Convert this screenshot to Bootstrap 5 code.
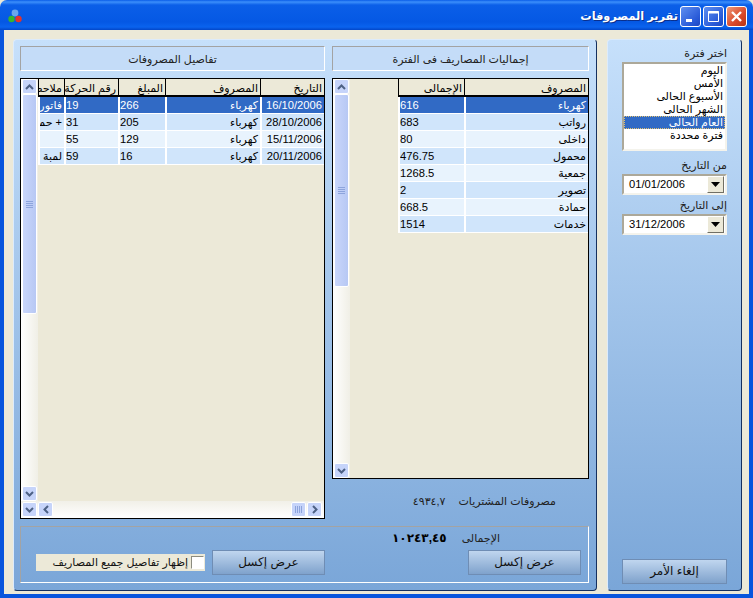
<!DOCTYPE html>
<html lang="ar" dir="rtl">
<head>
  <meta charset="UTF-8">
  <title>تقرير المصروفات</title>
  <meta name="viewport" content="width=device-width, initial-scale=1">
  <link href="https://cdn.jsdelivr.net/npm/bootstrap@5.3.0/dist/css/bootstrap.min.css" rel="stylesheet">
  <style>
    html, body { width: 753px; height: 598px; overflow: hidden; margin: 0; }
    body { font-family: "Liberation Sans", "DejaVu Sans", sans-serif; font-size: 11px; line-height: 13px; color: #000; background: #ece9d8; }
    .win { width: 753px; height: 598px; }
    .win-title { height: 30px; padding: 6px 6px 0 8px; border-radius: 7px 7px 0 0; background: linear-gradient(#0a5de8 0, #3c8ffb 2px, #0b5fe8 5px, #0558e4 22px, #0a63ee 27px, #0346c8 30px); }
    .win-title h1 { font-size: 11.3px; line-height: 21px; font-weight: 700; color: #fff; text-shadow: 1px 1px 0 #0a2f8c; margin: 0 2px 0 0; }
    .cap-btns { gap: 2px; }
    .cap-btn { width: 21px; height: 21px; border: 1px solid #fff; border-radius: 3px; background: linear-gradient(135deg, #5f8ff0, #2a5bd8 70%, #1e47c0); }
    .cap-close { background: linear-gradient(135deg, #ef9a78, #d8482a 60%, #b83414); }
    .app-icon { margin-right: auto; margin-top: 3px; }
    .win-body { height: 568px; padding: 9px 7px 3px 9px; border: solid #0855dd; border-width: 0 4px 4px; background: #ece9d8; gap: 10px; }
    .pane { background: linear-gradient(#c6e0fb, #7aa6d8); border: 1px solid; border-color: #dcebfc #15305f #15305f #dcebfc; border-radius: 4px; }
    .side-pane { width: 135px; padding: 7px 14px 6px; }
    .main-pane { width: 584px; padding: 6px 7px 7px 6px; }
    .pane-cols { gap: 7px; }
    .col-l { width: 305px; }
    .col-r { width: 257px; }
    .pane-head { height: 25px; line-height: 25px; text-align: center; color: #222; border: 1px solid; border-color: #a3a3a3 #fff #fff #a3a3a3; background: #c4dcf8; margin-bottom: 7px; }
    .data-box { border: 1px solid #000; background: #ece9d8; overflow: hidden; }
    .grid-l { height: 441px; }
    .grid-r { height: 401px; }
    .vbar { width: 17px; padding: 0 1px; background: linear-gradient(90deg, #fff, #f0efe6); }
    .sb-btn { width: 15px; height: 15px; border: 1px solid #fff; border-radius: 2px; background: #c6d4fa; flex-shrink: 0; }
    .sb-thumb { border: 1px solid #fff; border-radius: 2px; background: linear-gradient(90deg, #c9d6fb, #b7c8f4); color: #8da4dc; }
    .v-thumb-l { height: 220px; width: 15px; }
    .v-thumb-r { height: 193px; width: 15px; }
    .hbar { height: 17px; gap: 1px; padding: 0 2px 0 1px; background: linear-gradient(#f1f0e8, #fff); }
    .grid-table { table-layout: fixed; border-collapse: separate; border-spacing: 0; }
    .tbl-l { width: 286px; }
    .tbl-r { width: 190px; }
    .grid-table th { height: 18px; padding: 2px 2px 0; font-weight: 400; text-align: right; white-space: nowrap; overflow: hidden; border-left: 1px solid #000; border-bottom: 2px solid #000; background: #ece9d8; }
    .grid-table td { height: 17px; padding: 0 2px; white-space: nowrap; overflow: hidden; border-left: 2px solid #fff; border-bottom: 1px solid #fff; background: #e8f3fd; font-size: 11.2px; }
    .grid-table tr:nth-child(even) td { background: #d0e5fb; }
    .grid-table tr.row-sel td { background: #316ac5; color: #fff; }
    .grid-table td.num-cell { text-align: left; padding-left: 0; }
    .grid-table td.txt-cell { font-size: 11px; }
    .sum-row { height: 40px; padding: 16px 33px 0 0; gap: 13px; color: #222; }
    .total-box { height: 57px; margin-top: 7px; padding: 5px 7px 0 8px; border: 1px solid; border-color: #a3a3a3 #fff #fff #a3a3a3; }
    .total-line { height: 13px; padding-right: 81px; gap: 15px; margin-bottom: 5px; color: #222; }
    .total-line b { font-size: 12px; color: #000; }
    .xp-btn { height: 25px; padding: 0; font-size: 12px; line-height: 23px; color: #111; border: 1px solid #6f8db4; border-radius: 0; background: linear-gradient(#c0d6ef, #7fa2cc); }
    .xp-btn-wide { width: 113px; }
    .xp-btn-cancel { width: 105px; }
    .gap-btns { margin-right: 143px; margin-left: 7px; }
    .show-all { width: 169px; height: 17px; padding-right: 1px; gap: 3px; background: #ece9d8; color: #111; margin-top: 4px; }
    .xp-check { width: 13px; height: 13px; border: 1px solid; border-color: #8c8c80 #fff #fff #8c8c80; background: #fff; }
    .side-label { text-align: right; color: #222; height: 13px; margin-bottom: 2px; }
    .period-list { height: 89px; margin: 0 0 8px; padding: 0; background: #fff; border: 2px solid; border-color: #aca899 #f4f3ec #f4f3ec #aca899; }
    .period-list li { height: 13px; padding-right: 2px; text-align: right; white-space: nowrap; }
    .period-list li.sel { background: #316ac5; color: #fff; outline: 1px dotted #e0c070; outline-offset: -1px; }
    .date-combo { height: 21px; margin-bottom: 4px; padding: 0 1px; background: #fff; border: 2px solid; border-color: #aca899 #f4f3ec #f4f3ec #aca899; font-size: 11.2px; }
    .date-btn { width: 17px; height: 17px; background: #ece9d8; border: 1px solid; border-color: #fff #716f64 #716f64 #fff; }
  </style>
</head>
<body>
  <div class="win d-flex flex-column">
    <!-- title bar -->
    <div class="win-title d-flex align-items-start">
      <div class="cap-btns d-flex">
        <div class="cap-btn cap-close d-flex align-items-center justify-content-center">
          <svg width="13" height="13" viewBox="0 0 13 13"><path d="M2 2 11 11M11 2 2 11" stroke="#fff" stroke-width="2.4"/></svg>
        </div>
        <div class="cap-btn d-flex align-items-center justify-content-center">
          <svg width="13" height="13" viewBox="0 0 13 13"><path d="M1.5 1.5h10v10h-10z" fill="none" stroke="#fff"/><path d="M1 2.5h11" stroke="#fff" stroke-width="2"/></svg>
        </div>
        <div class="cap-btn d-flex align-items-center justify-content-center">
          <svg width="13" height="13" viewBox="0 0 13 13"><path d="M2 10.5h6" stroke="#fff" stroke-width="3"/></svg>
        </div>
      </div>
      <h1>تقرير المصروفات</h1>
      <svg class="app-icon" width="14" height="14" viewBox="0 0 14 14">
        <circle cx="7" cy="4" r="3.4" fill="#6aa7ee"/>
        <circle cx="3.5" cy="10" r="3.2" fill="#35b52f"/>
        <circle cx="10.5" cy="10" r="3.2" fill="#e5332a"/>
      </svg>
    </div>

    <div class="win-body d-flex">
      <!-- period pane -->
      <div class="pane side-pane d-flex flex-column">
        <div class="side-label">اختر فترة</div>
        <ul class="period-list list-unstyled">
          <li>اليوم</li>
          <li>الأمس</li>
          <li>الأسبوع الحالى</li>
          <li>الشهر الحالى</li>
          <li class="sel">العام الحالى</li>
          <li>فترة محددة</li>
        </ul>
        <div class="side-label">من التاريخ</div>
        <div class="date-combo d-flex align-items-center justify-content-between">
          <span class="date-btn d-flex align-items-center justify-content-center"><svg width="9" height="5" viewBox="0 0 9 5"><path d="M0 0h9L4.5 5z" fill="#000"/></svg></span>
          <span dir="ltr" class="ms-1">01/01/2006</span>
        </div>
        <div class="side-label">إلى التاريخ</div>
        <div class="date-combo d-flex align-items-center justify-content-between">
          <span class="date-btn d-flex align-items-center justify-content-center"><svg width="9" height="5" viewBox="0 0 9 5"><path d="M0 0h9L4.5 5z" fill="#000"/></svg></span>
          <span dir="ltr" class="ms-1">31/12/2006</span>
        </div>
        <button type="button" class="btn xp-btn xp-btn-cancel mt-auto">إلغاء الأمر</button>
      </div>

      <!-- report pane -->
      <div class="pane main-pane d-flex flex-column">
        <div class="pane-cols d-flex">
          <div class="col-r">
            <div class="pane-head">إجماليات المصاريف فى الفترة</div>
            <div class="data-box grid-r d-flex">
              <div class="flex-grow-1">
                <table class="grid-table tbl-r">
                  <colgroup><col style="width:124px"><col style="width:66px"></colgroup>
                  <thead><tr><th>المصروف</th><th>الإجمالى</th></tr></thead>
                  <tbody id="totalsRows"></tbody>
                </table>
              </div>
              <div class="vbar d-flex flex-column">
                <div class="sb-btn d-flex align-items-center justify-content-center"><svg width="9" height="6" viewBox="0 0 9 6"><path d="M1 5 4.5 1.5 8 5" fill="none" stroke="#4d6185" stroke-width="2"/></svg></div>
                <div class="sb-thumb v-thumb-r d-flex align-items-center justify-content-center"><svg width="7" height="7" viewBox="0 0 7 7"><path d="M0 .5h7M0 2.5h7M0 4.5h7M0 6.5h7" stroke="#8da4dc"/></svg></div>
                <div class="sb-btn mt-auto d-flex align-items-center justify-content-center"><svg width="9" height="6" viewBox="0 0 9 6"><path d="M1 1 4.5 4.5 8 1" fill="none" stroke="#4d6185" stroke-width="2"/></svg></div>
              </div>
            </div>
            <div class="sum-row d-flex">
              <span>مصروفات المشتريات</span>
              <span>٤٩٣٤,٧</span>
            </div>
          </div>

          <div class="col-l">
            <div class="pane-head">تفاصيل المصروفات</div>
            <div class="data-box grid-l d-flex flex-column">
              <div class="d-flex flex-grow-1 overflow-hidden">
                <div class="flex-grow-1">
                  <table class="grid-table tbl-l">
                    <colgroup><col style="width:64px"><col style="width:95px"><col style="width:47px"><col style="width:54px"><col style="width:26px"></colgroup>
                    <thead><tr><th>التاريخ</th><th>المصروف</th><th>المبلغ</th><th>رقم الحركة</th><th>ملاحظات</th></tr></thead>
                    <tbody id="detailRows"></tbody>
                  </table>
                </div>
                <div class="vbar d-flex flex-column">
                  <div class="sb-btn d-flex align-items-center justify-content-center"><svg width="9" height="6" viewBox="0 0 9 6"><path d="M1 5 4.5 1.5 8 5" fill="none" stroke="#4d6185" stroke-width="2"/></svg></div>
                  <div class="sb-thumb v-thumb-l d-flex align-items-center justify-content-center"><svg width="7" height="7" viewBox="0 0 7 7"><path d="M0 .5h7M0 2.5h7M0 4.5h7M0 6.5h7" stroke="#8da4dc"/></svg></div>
                  <div class="sb-btn mt-auto d-flex align-items-center justify-content-center"><svg width="9" height="6" viewBox="0 0 9 6"><path d="M1 1 4.5 4.5 8 1" fill="none" stroke="#4d6185" stroke-width="2"/></svg></div>
                </div>
              </div>
              <div class="hbar d-flex align-items-center">
                <div class="sb-btn d-flex align-items-center justify-content-center"><svg width="6" height="9" viewBox="0 0 6 9"><path d="M1 1 4.5 4.5 1 8" fill="none" stroke="#4d6185" stroke-width="2"/></svg></div>
                <div class="sb-btn d-flex align-items-center justify-content-center"><svg width="7" height="7" viewBox="0 0 7 7"><path d="M.5 0v7M2.5 0v7M4.5 0v7M6.5 0v7" stroke="#8da4dc"/></svg></div>
                <div class="sb-btn me-auto d-flex align-items-center justify-content-center"><svg width="6" height="9" viewBox="0 0 6 9"><path d="M5 1 1.5 4.5 5 8" fill="none" stroke="#4d6185" stroke-width="2"/></svg></div>
                <div class="sb-btn d-flex align-items-center justify-content-center"><svg width="9" height="6" viewBox="0 0 9 6"><path d="M1 1 4.5 4.5 8 1" fill="none" stroke="#4d6185" stroke-width="2"/></svg></div>
              </div>
            </div>
          </div>
        </div>

        <div class="total-box">
          <div class="total-line d-flex align-items-center">
            <span>الإجمالى</span>
            <b>١٠٢٤٣,٤٥</b>
          </div>
          <div class="d-flex align-items-start">
            <button type="button" class="btn xp-btn xp-btn-wide">عرض إكسل</button>
            <button type="button" class="btn xp-btn xp-btn-wide gap-btns">عرض إكسل</button>
            <div class="show-all d-flex align-items-center">
              <span class="xp-check"></span>
              <span>إظهار تفاصيل جميع المصاريف</span>
            </div>
          </div>
        </div>
      </div>
    </div>
  </div>

  <script src="https://cdn.jsdelivr.net/npm/bootstrap@5.3.0/dist/js/bootstrap.bundle.min.js"></script>
  <script>
    const totals = [
      ['كهرباء', '616'], ['رواتب', '683'], ['داخلى', '80'], ['محمول', '476.75'],
      ['جمعية', '1268.5'], ['تصوير', '2'], ['حمادة', '668.5'], ['خدمات', '1514']
    ];
    const details = [
      ['16/10/2006', 'كهرباء', '266', '19', 'فاتورة'],
      ['28/10/2006', 'كهرباء', '205', '31', '+ حمام'],
      ['15/11/2006', 'كهرباء', '129', '55', ''],
      ['20/11/2006', 'كهرباء', '16', '59', 'لمبة']
    ];
    document.getElementById('totalsRows').innerHTML = totals.map((r, i) =>
      `<tr class="${i === 0 ? 'row-sel' : ''}"><td class="txt-cell">${r[0]}</td><td class="num-cell">${r[1]}</td></tr>`).join('');
    document.getElementById('detailRows').innerHTML = details.map((r, i) =>
      `<tr class="${i === 0 ? 'row-sel' : ''}"><td>${r[0]}</td><td class="txt-cell">${r[1]}</td><td class="num-cell">${r[2]}</td><td class="num-cell">${r[3]}</td><td class="txt-cell">${r[4]}</td></tr>`).join('');
  </script>
</body>
</html>
